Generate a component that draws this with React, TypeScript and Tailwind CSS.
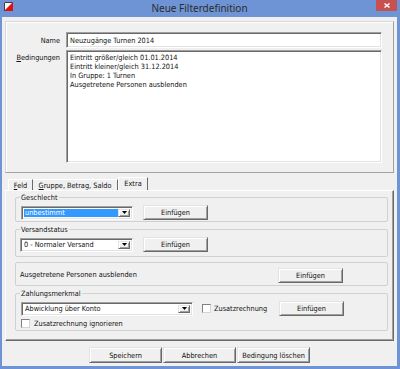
import React from 'react';

const raised =
  'bg-[#f0f0f0] border border-t-[#e3e3e3] border-l-[#e3e3e3] border-r-[#696969] border-b-[#696969] shadow-[inset_1px_1px_0_#ffffff,inset_-1px_-1px_0_#a0a0a0]';
const sunken =
  'bg-white border border-t-[#a0a0a0] border-l-[#a0a0a0] border-r-white border-b-white shadow-[inset_1px_1px_0_#696969,inset_-1px_-1px_0_#e3e3e3]';

function Btn({ children, className = '' }: { children: React.ReactNode; className?: string }) {
  return <div className={`flex items-center justify-center ${raised} ${className}`}>{children}</div>;
}

function Arrow() {
  return (
    <svg width="5" height="3" viewBox="0 0 5 3">
      <path d="M0 0h5L2.5 3z" fill="#000" />
    </svg>
  );
}

function Combo({ value, className, selected = false }: { value: string; className: string; selected?: boolean }) {
  return (
    <div className={`flex h-[14px] p-[2px] ${sunken} ${className}`}>
      <div className={`flex-1 flex items-center px-[1px] whitespace-nowrap ${selected ? 'bg-[#3399ff] text-white' : ''}`}>
        {value}
      </div>
      <div className={`w-[12px] flex items-center justify-center ${raised}`}>
        <Arrow />
      </div>
    </div>
  );
}

function Check() {
  return <div className="w-[9px] h-[9px] bg-white border border-t-[#808080] border-l-[#808080] border-r-[#d4d4d4] border-b-[#d4d4d4]" />;
}

export default function App() {
  return (
    <div className="w-[400px] h-[369px] bg-[#6e94d6] flex flex-col text-[#111] text-[7.3px] leading-[9px] font-[family-name:'DejaVu_Sans_Condensed','Liberation_Sans',sans-serif]">
      {/* title bar */}
      <div className="h-[17px] flex items-start shrink-0">
        <svg className="ml-[4px] mt-[2px]" width="9" height="9" viewBox="0 0 9 9">
          <rect x="0" y="0" width="9" height="9" fill="#ffffff" />
          <path d="M9 0V9H0z" fill="#e01010" />
          <path d="M0.5 9V0.5H9" fill="none" stroke="#404040" strokeWidth="1" />
        </svg>
        <div className="flex-1 text-center pl-[10px] text-[10px] leading-[16px] text-[#2b2b2b] font-[family-name:'Noto_Sans',sans-serif]">
          Neue Filterdefinition
        </div>
        <div className="w-[21px] h-[11px] mr-[3px] bg-[#c75050] flex items-center justify-center">
          <svg width="6" height="5" viewBox="0 0 6 5">
            <path d="M0.5 0.5L5.5 4.5M5.5 0.5L0.5 4.5" stroke="#fff" strokeWidth="1.4" />
          </svg>
        </div>
      </div>

      {/* client */}
      <div className="flex-1 ml-[2px] mr-[3px] mb-[3px] bg-[#f0f0f0] flex flex-col">
        <div className="mt-[4px] mx-[3px] h-[152px] border border-t-[#d8d8d8] border-l-[#d8d8d8] border-r-[#a0a0a0] border-b-[#a0a0a0] shadow-[inset_1px_1px_0_#ffffff] pt-[10px] pr-[11px] grid grid-cols-[54px_1fr] gap-x-[6px] gap-y-[2px] content-start">
          <div className="flex items-center justify-end h-[16px]">Name</div>
          <div className={`h-[16px] flex items-center px-[3px] ${sunken}`}>Neuzugänge Turnen 2014</div>
          <div className="text-right pt-[3px]">
            <span className="underline">B</span>edingungen
          </div>
          <div className={`h-[113px] px-[3px] pt-[2px] ${sunken}`}>
            <div>Eintritt größer/gleich 01.01.2014</div>
            <div>Eintritt kleiner/gleich 31.12.2014</div>
            <div>In Gruppe: 1 Turnen</div>
            <div>Ausgetretene Personen ausblenden</div>
          </div>
        </div>

        {/* tabs */}
        <div className="mt-[4px] ml-[6px] h-[13px] flex items-end">
          <div className="w-[25px] h-[11px] border-t border-l border-t-white border-l-white border-r border-r-[#696969] flex items-center justify-center">
            <span>
              <span className="underline">F</span>eld
            </span>
          </div>
          <div className="w-[85px] h-[11px] border-t border-t-white border-r border-r-[#696969] flex items-center justify-center">
            <span>
              <span className="underline">G</span>ruppe, Betrag, Saldo
            </span>
          </div>
          <div className="w-[30px] h-[13px] border-t border-l border-t-white border-l-white border-r border-r-[#696969] flex items-center justify-center pb-[1px]">
            Extra
          </div>
        </div>

        <div className="mx-[3px] h-[151px] border border-t-white border-l-white border-r-[#696969] border-b-[#696969] shadow-[inset_-1px_-1px_0_#a0a0a0] pt-[2px] pl-[9px] pr-[5px] flex flex-col">
          <fieldset className="border border-[#d0d0d0] rounded-[2px] px-[5px] pt-[3px] pb-[1px]">
            <legend className="px-[1px] -ml-[1px]">Geschlecht</legend>
            <div className="flex items-center h-[15px]">
              <Combo value="unbestimmt" className="w-[112px]" selected />
              <Btn className="ml-[10px] w-[65px] h-[15px]">Einfügen</Btn>
            </div>
          </fieldset>

          <fieldset className="mt-[3px] border border-[#d0d0d0] rounded-[2px] px-[4px] pt-[3px] pb-[4px]">
            <legend className="px-[1px]">Versandstatus</legend>
            <div className="flex items-center h-[15px]">
              <Combo value="0 - Normaler Versand" className="w-[113px]" />
              <Btn className="ml-[10px] w-[65px] h-[15px]">Einfügen</Btn>
            </div>
          </fieldset>

          <div className="mt-[5px] h-[24px] border border-[#d0d0d0] rounded-[2px] px-[4px] flex items-center">
            <div className="w-[258px]">Ausgetretene Personen ausblenden</div>
            <Btn className="w-[65px] h-[15px] mt-[2px]">Einfügen</Btn>
          </div>

          <fieldset className="mt-[3px] border border-[#d0d0d0] rounded-[2px] px-[5px] pt-[3px] pb-[2px]">
            <legend className="px-[1px] -ml-[1px]">Zahlungsmerkmal</legend>
            <div className="flex items-center h-[15px]">
              <Combo value="Abwicklung über Konto" className="w-[172px]" />
              <div className="ml-[9px]">
                <Check />
              </div>
              <div className="ml-[3px] w-[65px]">Zusatzrechnung</div>
              <Btn className="w-[65px] h-[15px]">Einfügen</Btn>
            </div>
            <div className="mt-[2px] h-[10px] flex items-center">
              <Check />
              <div className="ml-[4px]">Zusatzrechnung ignorieren</div>
            </div>
          </fieldset>
        </div>

        {/* footer buttons */}
        <div className="mt-[6px] flex justify-center gap-[1px]">
          <Btn className="w-[73px] h-[16px]">Speichern</Btn>
          <Btn className="w-[73px] h-[16px]">Abbrechen</Btn>
          <Btn className="w-[73px] h-[16px]">Bedingung löschen</Btn>
        </div>
      </div>
    </div>
  );
}
